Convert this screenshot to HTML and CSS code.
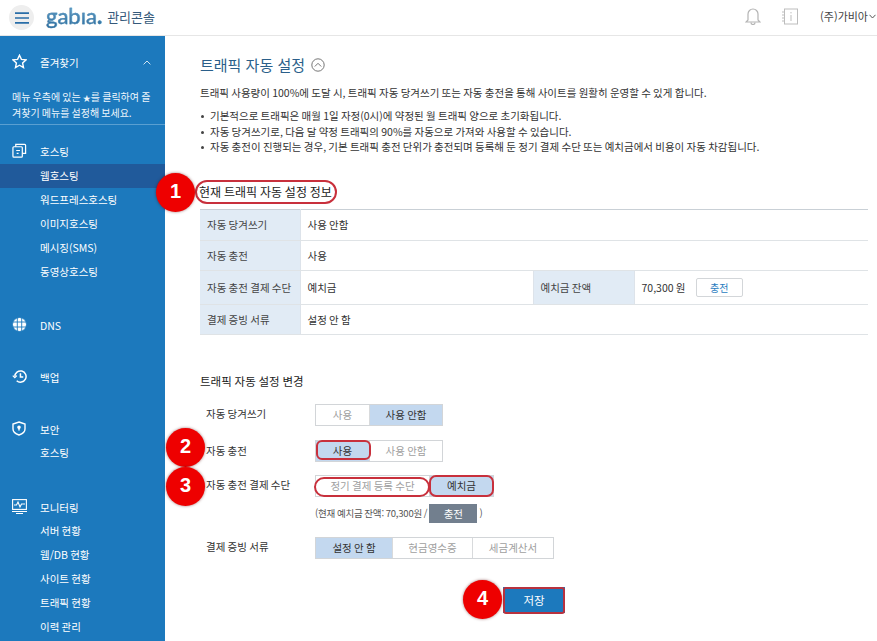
FILE: index.html
```html
<!DOCTYPE html>
<html lang="ko">
<head>
<meta charset="utf-8">
<title>트래픽 자동 설정</title>
<link rel="stylesheet" href="styles.css">
</head>
<body>
<header class="topbar">
  <button class="menu-btn" aria-label="menu"><svg width="14" height="12" viewBox="0 0 14 12"><path d="M0 1.2h14M0 6h14M0 10.8h14" stroke="#2a6ea8" stroke-width="1.7"/></svg></button>
  <span class="logo">gabıa<span class="logo-dot">.</span></span>
  <span class="console">관리콘솔</span>
  <div class="top-right">
    <svg class="ic-bell" width="16" height="18" viewBox="0 0 16 18" fill="none" stroke="#b4b4b4" stroke-width="1.2"><path d="M3 13V7a5 5 0 0 1 10 0v6l2 2H1z"/><path d="M6 15.500a2 2 0 0 0 4 0"/></svg>
    <svg class="ic-book" width="16" height="17" viewBox="0 0 16 17" fill="none" stroke="#bdbdbd" stroke-width="1"><rect x="2.500" y="1" width="13" height="15"/><path d="M0 4h3M0 7h3M0 10h3M0 13h3M9 7v6M9 4v1.400"/></svg>
    <span class="user">(주)가비아</span>
    <svg width="7" height="5" viewBox="0 0 7 5" fill="none" stroke="#555" stroke-width="1"><path d="M.5.8 3.500 4 6.500.8"/></svg>
  </div>
</header>
<div class="shell">
  <nav class="side">
    <div class="side-fav">
      <div class="side-head">
        <svg class="side-ic" width="15" height="15" viewBox="0 0 18 18" fill="none" stroke="#fff" stroke-width="1.700"><path d="M9 1.500l2.300 5 5.400.6-4 3.700 1.100 5.400L9 13.500 4.200 16.200l1.100-5.400-4-3.700 5.400-.6z"/></svg>
        <span>즐겨찾기</span>
        <svg class="chev" width="8" height="5" viewBox="0 0 8 5" fill="none" stroke="#cfe3f2" stroke-width="1"><path d="M.6 4.400 4 1l3.400 3.400"/></svg>
      </div>
      <p class="side-note">메뉴 우측에 있는 <span class="mini-star">★</span>를 클릭하여 즐겨찾기 메뉴를 설정해 보세요.</p>
    </div>
    <div class="side-group first">
      <div class="side-head">
        <svg class="side-ic" width="15" height="15" viewBox="0 0 16 16" fill="none" stroke="#fff" stroke-width="1.300"><rect x="1" y="4" width="10" height="11" rx="1"/><path d="M4 4V1.500h9.500a1 1 0 0 1 1 1V11H11M4.500 8h4M5 11h2"/></svg>
        <span>호스팅</span>
      </div>
      <a class="side-item active">웹호스팅</a>
      <a class="side-item">워드프레스호스팅</a>
      <a class="side-item">이미지호스팅</a>
      <a class="side-item">메시징(SMS)</a>
      <a class="side-item">동영상호스팅</a>
    </div>
    <div class="side-group">
      <div class="side-head">
        <svg class="side-ic" width="15" height="15" viewBox="0 0 15 15" fill="#fff" stroke="#1c79bd" stroke-width=".9"><circle cx="7.500" cy="7.500" r="7"/><path d="M.5 5h14M.5 10h14M5.300 .5v14M9.700 .5v14" fill="none"/></svg>
        <span>DNS</span>
      </div>
    </div>
    <div class="side-group">
      <div class="side-head">
        <svg class="side-ic" width="15" height="15" viewBox="0 0 16 15" fill="none" stroke="#fff" stroke-width="1.600"><path d="M3 7.500a6 6 0 1 1 2 4.500"/><path d="M9 4v4h3"/><path d="M.8 6.500 3 8.700l2.200-2.200" stroke-width="1.300"/></svg>
        <span>백업</span>
      </div>
    </div>
    <div class="side-group with-items">
      <div class="side-head">
        <svg class="side-ic" width="14" height="15" viewBox="0 0 14 15" fill="none" stroke="#fff" stroke-width="1.400"><path d="M7 1l6 2v5c0 3-3 5-6 6-3-1-6-3-6-6V3z"/><circle cx="7" cy="6.200" r="1.100" fill="#fff"/><path d="M7 7v2.600"/></svg>
        <span>보안</span>
      </div>
      <a class="side-item">호스팅</a>
    </div>
    <div class="side-group">
      <div class="side-head">
        <svg class="side-ic" width="15" height="15" viewBox="0 0 15 15" fill="none" stroke="#fff" stroke-width="1.100"><rect x=".6" y=".6" width="13.800" height="9.800"/><path d="M2 6h2.500l1.500-3 2 5 1.500-3H13M0 12.500h15M4 14.500h7"/></svg>
        <span>모니터링</span>
      </div>
      <a class="side-item">서버 현황</a>
      <a class="side-item">웹/DB 현황</a>
      <a class="side-item">사이트 현황</a>
      <a class="side-item">트래픽 현황</a>
      <a class="side-item">이력 관리</a>
    </div>
  </nav>
  <main class="content">
    <h1 class="title">트래픽 자동 설정
      <svg width="14" height="14" viewBox="0 0 14 14" fill="none" stroke="#666" stroke-width=".9"><circle cx="7" cy="7" r="6.200"/><path d="M3.800 8.500 7 5.300l3.200 3.200"/></svg>
    </h1>
    <p class="lead">트래픽 사용량이 100%에 도달 시, 트래픽 자동 당겨쓰기 또는 자동 충전을 통해 사이트를 원활히 운영할 수 있게 합니다.</p>
    <ul class="notes">
      <li>기본적으로 트래픽은 매월 1일 자정(0시)에 약정된 월 트래픽 양으로 초기화됩니다.</li>
      <li>자동 당겨쓰기로, 다음 달 약정 트래픽의 90%를 자동으로 가져와 사용할 수 있습니다.</li>
      <li>자동 충전이 진행되는 경우, 기본 트래픽 충전 단위가 충전되며 등록해 둔 정기 결제 수단 또는 예치금에서 비용이 자동 차감됩니다.</li>
    </ul>
    <h2 class="section-title current">현재 트래픽 자동 설정 정보</h2>
    <table class="info">
      <colgroup><col class="c1"><col class="c2"><col class="c3"><col></colgroup>
      <tr class="r1"><th>자동 당겨쓰기</th><td colspan="3">사용 안함</td></tr>
      <tr class="r2"><th>자동 충전</th><td colspan="3">사용</td></tr>
      <tr class="r3"><th>자동 충전 결제 수단</th><td>예치금</td><th class="th2">예치금 잔액</th><td>70,300 원 <button class="charge-light">충전</button></td></tr>
      <tr class="r4"><th>결제 증빙 서류</th><td colspan="3">설정 안 함</td></tr>
    </table>
    <h2 class="section-title change">트래픽 자동 설정 변경</h2>
    <div class="form">
      <div class="form-row">
        <div class="label">자동 당겨쓰기</div>
        <div class="seg"><span class="w53">사용</span><span class="w73 on">사용 안함</span></div>
      </div>
      <div class="form-row tight">
        <div class="label low">자동 충전</div>
        <div class="seg"><span class="w53 on">사용</span><span class="w73">사용 안함</span></div>
      </div>
      <div class="form-row">
        <div class="label">자동 충전 결제 수단</div>
        <div>
          <div class="seg"><span class="w113">정기 결제 등록 수단</span><span class="w64 on">예치금</span></div>
          <div class="hint">(현재 예치금 잔액: 70,300원 / <button class="charge-dark">충전</button> )</div>
        </div>
      </div>
      <div class="form-row">
        <div class="label">결제 증빙 서류</div>
        <div class="seg"><span class="w76 on">설정 안 함</span><span class="w80">현금영수증</span><span class="w81">세금계산서</span></div>
      </div>
    </div>
    <div class="save-row"><button class="save">저장</button></div>
  </main>
</div>

<div class="oval o1"></div>
<div class="oval o2"></div>
<div class="oval o3a"></div>
<div class="oval o3b"></div>
<div class="oval o4"></div>
<div class="badge b1">1</div>
<div class="badge b2">2</div>
<div class="badge b3">3</div>
<div class="badge b4">4</div>
</body>
</html>
```
FILE: styles.css
```css
* { box-sizing: border-box; }
html, body { margin: 0; height: 641px; overflow: hidden; background: #fff; }
body { font-family: "Noto Sans CJK KR", "Noto Sans", sans-serif; font-size: 10.5px; color: #333; position: relative; word-spacing: -.65px; }

.topbar { height: 36px; display: flex; align-items: center; padding-left: 9px; border-bottom: 1px solid #e6e6e6; }
.menu-btn { width: 25px; height: 25px; border: 0; padding: 0; border-radius: 50%; background: #eeeeee; display: flex; align-items: center; justify-content: center; }
.logo { margin-left: 12px; font-family: "Lato", sans-serif; font-size: 22px; line-height: 24px; background: linear-gradient(#6aa7cf, #2a6a9a); -webkit-background-clip: text; background-clip: text; color: transparent; -webkit-text-stroke: .35px #4a8ab5; margin-top: -4px; }
.logo-dot { font-weight: 700; }
.console { margin-left: 5px; font-size: 13px; color: #35597a; margin-top: -2px; }
.top-right { margin-left: auto; display: flex; align-items: center; padding: 0 1px 3px 0; }
.ic-bell { margin-right: 21px; }
.ic-book { margin-right: 22px; }
.user { font-size: 11px; color: #444; margin-right: 1px; }

.shell { display: flex; height: 605px; }
.side { width: 165px; flex: none; background: #1c79bd; color: #fff; overflow: hidden; }
.side-fav { height: 89px; padding-top: 17px; border-bottom: 1px solid #5a9fd1; }
.side-head { height: 18px; display: flex; align-items: center; position: relative; padding-left: 40px; }
.side-ic { position: absolute; left: 12px; top: 1px; }
.chev { position: absolute; left: 143px; top: 7px; }
.side-note { margin: 18px 8px 0 12px; font-size: 10px; line-height: 15px; color: #eef6fc; }
.mini-star { font-size: 8px; }
.side-group { padding-top: 34px; }
.side-group.first { padding-top: 17px; margin-bottom: -2px; }
.side-group.with-items { margin-bottom: -1px; }
.side-item { display: block; height: 24px; line-height: 24px; padding-left: 40px; }
.side-head + .side-item { margin-top: 3px; }
.side-group.first .side-head + .side-item { margin-top: 4px; }
.side-item.active { background: #205a9b; }

.content { flex: 1; padding: 0 9px 0 35px; min-width: 0; }
.title { margin: 19px 0 0; height: 20px; line-height: 20px; font-size: 15px; font-weight: 400; color: #2a5f8a; display: flex; align-items: center; gap: 6px; word-spacing: 0; }
.lead { margin: 10px 0 0; line-height: 15px; }
.notes { list-style: none; margin: 8px 0 0; padding: 0; line-height: 15.500px; }
.notes li { padding-left: 10px; position: relative; }
.notes li::before { content: ""; position: absolute; left: 1px; top: 7px; width: 3px; height: 3px; border-radius: 50%; background: #444; }
.section-title { margin: 0; font-weight: 400; color: #222; }
.section-title.current { margin: 27px 0 0 -1px; height: 20px; line-height: 20px; font-size: 12px; word-spacing: -.5px; }

.info { width: 668px; margin-top: 7px; border-collapse: collapse; border-top: 1px solid #c9d0d6; table-layout: fixed; }
.c1 { width: 100px; } .c2 { width: 233px; } .c3 { width: 101px; }
.info th { background: #e1ebf5; font-weight: 400; text-align: left; padding: 0 0 0 7px; border-bottom: 1px solid #dfe3e6; border-right: 1px solid #dde3ea; color: #444; white-space: nowrap; }
.info td { padding: 0 0 0 7px; border-bottom: 1px solid #dfe3e6; }
.info .th2 { border-left: 1px solid #dde3ea; }
.r1 { height: 31px; } .r2 { height: 30px; } .r3 { height: 34px; } .r4 { height: 30px; }
.charge-light { width: 47px; height: 19px; margin-left: 8px; border: 1px solid #d3d6d9; border-radius: 2px; background: #fff; color: #2a7cc0; font: inherit; font-size: 10px; padding: 0; }

.section-title.change { margin-top: 37px; height: 18px; line-height: 18px; font-size: 11.500px; word-spacing: -.4px; }
.form { margin-top: 14px; padding-left: 6px; }
.form-row { display: flex; margin-bottom: 14px; min-height: 22px; }
.form-row.tight { margin-bottom: 13px; }
.label { width: 109px; flex: none; line-height: 19px; color: #333; }
.label.low { line-height: 20px; padding-top: 1px; }
.seg { display: flex; height: 22px; border: 1px solid #d2d5d8; width: max-content; }
.seg span { display: flex; align-items: center; justify-content: center; color: #a0a0a0; border-left: 1px solid #d8dadc; }
.seg span:first-child { border-left: 0; }
.seg span.on { background: #c3d8ef; color: #333; }
.w53 { width: 53px; } .w73 { width: 73px; } .w113 { width: 113px; } .w64 { width: 64px; } .w76 { width: 76px; } .w80 { width: 80px; } .w81 { width: 81px; }
.hint { margin-top: 7px; height: 19px; display: flex; align-items: center; font-size: 9.500px; letter-spacing: -.2px; color: #555; gap: 1px; }
.charge-dark { width: 48px; height: 19px; border: 0; background: #727f8e; color: #fff; font: inherit; padding: 0; margin: 0 1px 0 1px; font-size: 10.500px; }

.save-row { display: flex; margin-top: 28px; padding-left: 303px; }
.save { width: 62px; height: 26px; border: 0; background: #1c79bd; color: #fff; font: inherit; font-size: 11.500px; padding: 0; }

.oval { position: absolute; border: 2px solid #c8303c; }
.o1 { left: 195px; top: 180px; width: 142px; height: 24px; border-radius: 12px; }
.o2 { left: 316px; top: 440px; width: 55px; height: 20px; border-radius: 6px; }
.o3a { left: 314px; top: 477px; width: 116px; height: 20px; border-radius: 10px; }
.o3b { left: 429px; top: 475px; width: 65px; height: 22px; border-radius: 7px; }
.o4 { left: 503px; top: 587px; width: 62px; height: 27px; border-radius: 3px; border-color: #b8323f; }
.badge { position: absolute; width: 39px; height: 39px; border-radius: 50%; background: #ee0000; color: #fff; font-family: "Liberation Sans", sans-serif; font-weight: 700; font-size: 20px; line-height: 37px; text-align: center; box-shadow: 0 0 3px rgba(90,0,0,.55); }
.b1 { left: 156px; top: 173px; }
.b2 { left: 166px; top: 428px; }
.b3 { left: 166px; top: 467px; }
.b4 { left: 463px; top: 580px; }
```
